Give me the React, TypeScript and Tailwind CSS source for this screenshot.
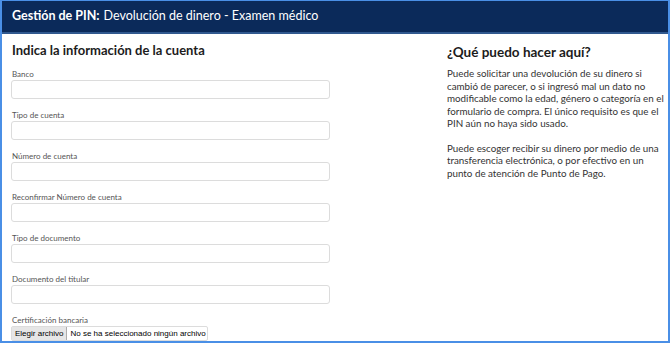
import React from "react";

const fields = [
  "Banco",
  "Tipo de cuenta",
  "Número de cuenta",
  "Reconfirmar Número de cuenta",
  "Tipo de documento",
  "Documento del titular",
];

export default function App() {
  return (
    <div
      className="w-[670px] h-[343px] overflow-hidden bg-white border-t border-l-2 border-r-2 border-b-2 border-[#4a8fe6] text-[#222]"
      style={{ fontFamily: "Lato, 'Open Sans', sans-serif" }}
    >
      {/* header */}
      <div className="h-[33px] bg-[#0b2a5a] border-b-2 border-[#31598f] flex items-center pl-[10px] text-white text-[12.5px]">
        <span className="font-bold">Gestión de PIN:</span>
        <span className="ml-[4px]">Devolución de dinero - Examen médico</span>
      </div>

      <div className="flex">
        {/* form */}
        <div className="w-[445px] pl-[9px] pt-[8px]">
          <h2 className="text-[13px] font-bold leading-[16px] pl-[1px] text-[#1c1c1c]">
            Indica la información de la cuenta
          </h2>
          <div className="mt-[10px] flex flex-col gap-[10px]">
            {fields.map((f) => (
              <div key={f}>
                <label className="block text-[8px] leading-[12px] text-[#555] pl-[1px]">{f}</label>
                <input
                  type="text"
                  className="block w-[319px] h-[19px] border border-[#dcdcdc] rounded-[3px] bg-white"
                />
              </div>
            ))}
            <div>
              <label className="block text-[8px] leading-[12px] text-[#555] pl-[1px]">
                Certificación bancaria
              </label>
              <div
                className="flex w-fit items-center h-[15px] border border-[#dcdcdc] rounded-[2px] pr-[1px] text-[8px] text-black"
                style={{ fontFamily: "'Liberation Sans', Arial, sans-serif" }}
              >
                <span className="h-full flex items-center px-[3px] bg-[#e6e6e6] border-r border-[#adadad]">
                  Elegir archivo
                </span>
                <span className="ml-[3px]">No se ha seleccionado ningún archivo</span>
              </div>
            </div>
          </div>
        </div>

        {/* help */}
        <div className="flex-1 pt-[10px] text-[#333]">
          <h3 className="text-[13.5px] font-bold leading-[16px] text-[#1c1c1c]">¿Qué puedo hacer aquí?</h3>
          <p className="mt-[7px] text-[9.8px] leading-[12.5px] whitespace-nowrap">
            Puede solicitar una devolución de su dinero si
            <br />
            cambió de parecer, o si ingresó mal un dato no
            <br />
            modificable como la edad, género o categoría en el
            <br />
            formulario de compra. El único requisito es que el
            <br />
            PIN aún no haya sido usado.
          </p>
          <p className="mt-[12px] text-[9.8px] leading-[12.5px] whitespace-nowrap">
            Puede escoger recibir su dinero por medio de una
            <br />
            transferencia electrónica, o por efectivo en un
            <br />
            punto de atención de Punto de Pago.
          </p>
        </div>
      </div>
    </div>
  );
}
